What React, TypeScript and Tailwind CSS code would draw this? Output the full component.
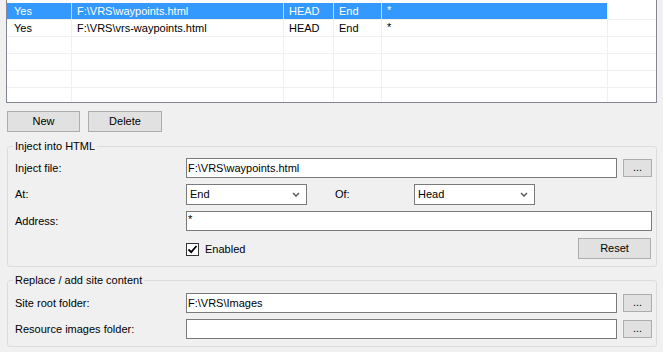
import React from "react";

const rows = [
  { enabled: "Yes", file: "F:\\VRS\\waypoints.html", at: "HEAD", of: "End", address: "*", selected: true },
  { enabled: "Yes", file: "F:\\VRS\\vrs-waypoints.html", at: "HEAD", of: "End", address: "*", selected: false },
  null,
  null,
  null,
  null,
];

const Chevron = () => (
  <svg width="8" height="5" viewBox="0 0 8 5" className="shrink-0">
    <path d="M1 1 L4 4 L7 1" fill="none" stroke="#606060" strokeWidth="1.6" />
  </svg>
);

const TextBox = ({ value, className }: { value?: string; className: string }) => (
  <div className={`h-[20px] border border-[#7a7a7a] bg-white pl-[1px] flex items-center ${className}`}>
    {value}
  </div>
);

const Combo = ({ value }: { value: string }) => (
  <div className="h-[21px] w-[121px] border border-[#7a7a7a] bg-white pl-[3px] pr-[6px] flex items-center justify-between">
    <span>{value}</span>
    <Chevron />
  </div>
);

const Button = ({ label, className }: { label: string; className: string }) => (
  <div className={`border border-[#adadad] bg-[#e1e1e1] flex items-center justify-center ${className}`}>
    {label}
  </div>
);

const Browse = () => (
  <div className="ml-[6px] h-[18px] w-[29px] border border-[#adadad] bg-[#e1e1e1] flex items-end justify-center pb-[3px] leading-none">
    ...
  </div>
);

export default function App() {
  return (
    <div className="w-[663px] h-[352px] overflow-hidden bg-[#f0f0f0] text-[11px] leading-none text-black font-['Liberation_Sans',Arial,sans-serif]">
      {/* list view */}
      <div className="ml-[6px] w-[651px] h-[103px] border-x border-b border-[#828790] bg-white overflow-hidden pt-[3px]">
        {rows.map((row, i) => {
          const sel = row?.selected;
          const cell = sel
            ? "bg-[#3399ff] text-white border-r border-[#b9dcff]"
            : "border-r border-[#f0f0f0]";
          return (
            <div key={i} className="flex h-[17px] border-b border-[#f0f0f0]">
              <div className={`w-[65px] pl-[7px] flex items-center ${cell}`}>{row?.enabled}</div>
              <div className={`w-[212px] pl-[5px] flex items-center ${cell}`}>{row?.file}</div>
              <div className={`w-[50px] pl-[5px] flex items-center ${cell}`}>{row?.at}</div>
              <div className={`w-[48px] pl-[5px] flex items-center ${cell}`}>{row?.of}</div>
              <div
                className={`w-[226px] pl-[5px] pt-[2px] ${
                  sel ? "bg-[#3399ff] text-white" : ""
                } border-r border-[#f0f0f0]`}
              >
                {row?.address}
              </div>
              <div className="w-[48px]" />
            </div>
          );
        })}
      </div>

      {/* buttons */}
      <div className="mt-[8px] pl-[7px] flex gap-[8px]">
        <Button label="New" className="h-[21px] w-[73px]" />
        <Button label="Delete" className="h-[21px] w-[74px]" />
      </div>

      {/* Inject into HTML */}
      <fieldset className="mt-[8px] ml-[7px] w-[650px] h-[127px] border border-[#dcdcdc] rounded-[3px] pl-[7px] pr-[4px]">
        <legend className="ml-[-2px] px-[2px] h-[13px] leading-[13px]">Inject into HTML</legend>
        <div className="mt-[5px] flex items-center h-[20px]">
          <div className="w-[171px]">Inject file:</div>
          <TextBox value="F:\VRS\waypoints.html" className="w-[431px]" />
          <Browse />
        </div>
        <div className="mt-[6px] flex items-center h-[21px]">
          <div className="w-[171px]">At:</div>
          <Combo value="End" />
          <div className="ml-[28px] w-[79px]">Of:</div>
          <Combo value="Head" />
        </div>
        <div className="mt-[6px] flex items-center h-[20px]">
          <div className="w-[171px]">Address:</div>
          <TextBox value="*" className="w-[466px] items-start pt-[2px]" />
        </div>
        <div className="mt-[7px] flex items-center h-[21px]">
          <div className="w-[171px]" />
          <div className="mt-[2px] w-[13px] h-[13px] border border-[#333333] bg-white flex items-center justify-center">
            <svg width="11" height="11" viewBox="0 0 11 11">
              <path d="M1.5 5.5 L4.2 8.2 L9.5 2" fill="none" stroke="#000" strokeWidth="1.8" />
            </svg>
          </div>
          <div className="ml-[6px] mt-[2px]">Enabled</div>
          <Button label="Reset" className="ml-auto mr-[1px] h-[21px] w-[73px]" />
        </div>
      </fieldset>

      {/* Replace / add site content */}
      <fieldset className="mt-[7px] ml-[7px] w-[650px] h-[73px] border border-[#dcdcdc] rounded-[3px] pl-[7px] pr-[4px]">
        <legend className="ml-[-2px] px-[2px] h-[13px] leading-[13px]">Replace / add site content</legend>
        <div className="mt-[6px] flex items-center h-[20px]">
          <div className="w-[171px]">Site root folder:</div>
          <TextBox value="F:\VRS\Images" className="w-[431px]" />
          <Browse />
        </div>
        <div className="mt-[6px] flex items-center h-[20px]">
          <div className="w-[171px]">Resource images folder:</div>
          <TextBox className="w-[431px]" />
          <Browse />
        </div>
      </fieldset>
    </div>
  );
}
